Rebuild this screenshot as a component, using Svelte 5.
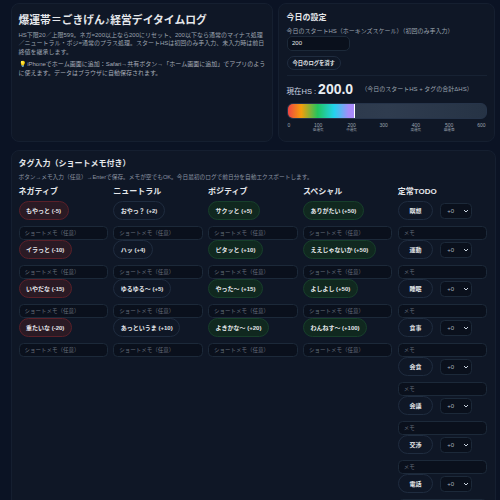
<script>
  const columns = [
    {
      title: "ネガティブ",
      tone: "neg",
      tags: ["もやっと (-5)", "イラっと (-10)", "いやだな (-15)", "重たいな (-20)"],
    },
    {
      title: "ニュートラル",
      tone: "neu",
      tags: ["おやっ？ (+2)", "ハッ (+4)", "ゆるゆる〜 (+5)", "あっというま (+10)"],
    },
    {
      title: "ポジティブ",
      tone: "pos",
      tags: ["サクッと (+5)", "ピタッと (+10)", "やった〜 (+15)", "よきかな〜 (+20)"],
    },
    {
      title: "スペシャル",
      tone: "pos",
      tags: ["ありがたい (+50)", "ええじゃないか (+50)", "よしよし (+50)", "わんねす〜 (+100)"],
    },
  ];

  const todos = ["瞑想", "運動", "睡眠", "食事", "会食", "会議", "交渉", "電話"];

  const ticks = [
    { value: "0", note: "" },
    { value: "100", note: "低運気" },
    { value: "200", note: "中運気" },
    { value: "300", note: "" },
    { value: "400", note: "高運気" },
    { value: "500", note: "爆運帯" },
    { value: "600", note: "" },
  ];
</script>

<div class="page">
  <div class="top">
    <section class="panel intro">
      <h1>爆運帯＝ごきげん♪経営デイタイムログ</h1>
      <p>HS下限20／上限599。ネガ=200以上なら200にリセット、200以下なら通常のマイナス処理／ニュートラル・ポジ=通常のプラス処理。スタートHSは初回のみ手入力、未入力時は前日終値を継承します。</p>
      <p>💡 iPhoneでホーム画面に追加：Safari→共有ボタン→「ホーム画面に追加」でアプリのように使えます。データはブラウザに自動保存されます。</p>
    </section>

    <section class="panel settings">
      <h2>今日の設定</h2>
      <label for="start">今日のスタートHS（ホーキンズスケール）（初回のみ手入力）</label>
      <input id="start" class="start" value="200" />
      <button class="clear">今日のログを消す</button>
      <div class="current">
        <span class="cur-label">現在HS :</span>
        <strong>200.0</strong>
        <span class="cur-note">（今日のスタートHS + タグの合計ΔHS）</span>
      </div>
      <div class="bar">
        <div class="fill"></div>
        <div class="marker"></div>
      </div>
      <div class="ticks">
        {#each ticks as tick}
          <div class="tick">
            <span>{tick.value}</span>
            <small>{tick.note}</small>
          </div>
        {/each}
      </div>
    </section>
  </div>

  <section class="panel tags">
    <h2>タグ入力（ショートメモ付き）</h2>
    <p class="hint">ボタン→メモ入力（任意）→Enterで保存。メモが空でもOK。今日最初のログで前日分を自動エクスポートします。</p>
    <div class="grid">
      {#each columns as col}
        <div class="col">
          <h3>{col.title}</h3>
          {#each col.tags as tag}
            <div class="row"><button class="chip {col.tone}">{tag}</button></div>
            <input class="memo" placeholder="ショートメモ（任意）" />
          {/each}
        </div>
      {/each}
      <div class="col">
        <h3>定常TODO</h3>
        {#each todos as todo}
          <div class="row">
            <button class="chip neu todo">{todo}</button>
            <select><option>+0</option></select>
          </div>
          <input class="memo" placeholder="メモ" />
        {/each}
      </div>
    </div>
  </section>
</div>

<style>
  :global(body) {
    background: #0b1324;
    color: #e5e7eb;
    font-family: "Liberation Sans", "Noto Sans CJK JP", sans-serif;
    overflow: hidden;
  }

  .page {
    height: 500px;
    overflow: hidden;
    padding: 3px 5px 0 10.5px;
    box-sizing: border-box;
  }

  .top {
    display: grid;
    grid-template-columns: 262px 217px;
    gap: 5.5px;
    margin-bottom: 8px;
  }

  .panel {
    background: #0f1726;
    border: 1px solid #151f30;
    border-radius: 8px;
    box-sizing: border-box;
  }

  .intro {
    padding: 9px 6px 9px 7px;
  }

  h1 {
    margin: 0 0 3.6px;
    font-size: 10.8px;
    line-height: 14px;
    font-weight: 700;
    color: #e5e7eb;
  }

  .intro p {
    margin: 0 0 3.3px;
    font-size: 6px;
    line-height: 8.7px;
    color: #9ca3af;
  }

  .intro p:last-child {
    color: #a7adb8;
  }

  h2 {
    margin: 0;
    font-size: 8px;
    line-height: 11px;
    font-weight: 700;
  }

  .settings {
    padding: 8px 7.5px 7.5px;
    display: flex;
    flex-direction: column;
    align-items: flex-start;
  }

  .settings label {
    margin-top: 4px;
    font-size: 6px;
    line-height: 8px;
    color: #9ca3af;
  }

  input,
  select,
  button {
    font-family: inherit;
    box-sizing: border-box;
  }

  .start {
    width: 63px;
    height: 14.5px;
    margin-top: 1px;
    padding: 0 4.5px;
    font-size: 6px;
    color: #e5e7eb;
    background: #0a101c;
    border: 1px solid #1c2939;
    border-radius: 5px;
  }

  .clear {
    margin-top: 5.5px;
    height: 14px;
    padding: 0 5px;
    font-size: 5.3px;
    font-weight: 700;
    color: #e5e7eb;
    background: #0f1726;
    border: 1px solid #1f2c3f;
    border-radius: 7px;
    white-space: nowrap;
  }

  .current {
    align-self: stretch;
    margin-top: 5px;
    padding-top: 5px;
    border-top: 1px solid #172233;
    display: flex;
    align-items: center;
    height: 16px;
    white-space: nowrap;
  }

  .cur-label {
    font-size: 7.5px;
    color: #cbd5e1;
    margin-top: 2px;
  }

  .current strong {
    font-size: 14px;
    margin-left: 2px;
    color: #e9edf2;
  }

  .cur-note {
    margin-left: 8px;
    margin-bottom: 2px;
    font-size: 6px;
    color: #9ca3af;
  }

  .bar {
    position: relative;
    align-self: stretch;
    height: 15.5px;
    margin-top: 6px;
    border-radius: 6px;
    border: 1px solid #26344a;
    box-sizing: border-box;
    background: linear-gradient(90deg, #2a3749, #2f3c4f 50%, #263345);
    overflow: hidden;
  }

  .fill {
    height: 100%;
    width: 33.4%;
    background: linear-gradient(90deg, #ef4444, #f59e0b 20%, #22c55e 45%, #22d3ee 70%, #a78bfa 92%);
  }

  .marker {
    position: absolute;
    top: 0;
    bottom: 0;
    left: 33.4%;
    width: 1.5px;
    background: #fff;
  }

  .ticks {
    align-self: stretch;
    display: flex;
    justify-content: space-between;
    margin-top: 3px;
    padding: 0 1px;
  }

  .tick {
    display: flex;
    flex-direction: column;
    align-items: center;
    font-size: 5px;
    line-height: 6px;
    color: #9ca3af;
    white-space: nowrap;
  }

  .tick small {
    font-size: 3.6px;
    line-height: 5.5px;
    min-height: 5.5px;
  }

  .tags {
    height: 360px;
    width: 485px;
    padding: 7px 7px;
  }

  .hint {
    margin: 4.7px 0 0;
    font-size: 5.7px;
    line-height: 8px;
    color: #8b93a1;
  }

  .grid {
    display: grid;
    grid-template-columns: repeat(5, 89.5px);
    column-gap: 5.3px;
    margin-top: 3.6px;
  }

  .col {
    display: flex;
    flex-direction: column;
    min-width: 0;
  }

  h3 {
    margin: 0 0 2.7px;
    font-size: 8px;
    line-height: 14px;
    font-weight: 700;
    color: #e5e7eb;
  }

  .row {
    display: flex;
    align-items: center;
    gap: 7px;
    height: 19px;
    margin-bottom: 5.5px;
  }

  .chip {
    height: 19px;
    padding: 0 6.5px;
    font-size: 6px;
    font-weight: 700;
    color: #e5e7eb;
    border-radius: 9.5px;
    white-space: nowrap;
    border: 1px solid #1f2c3f;
    background: #0f1726;
  }

  .chip.neg {
    background: #2a1a24;
    border-color: #5a2029;
  }

  .chip.pos {
    background: #10281f;
    border-color: #173f2b;
  }

  .chip.todo {
    width: 35.5px;
    padding: 0;
  }

  select {
    appearance: none;
    width: 31.5px;
    height: 15.5px;
    padding: 0 0 0 6px;
    font-size: 6px;
    color: #a9b1bd;
    background: #0a101c url("data:image/svg+xml,%3Csvg xmlns='http://www.w3.org/2000/svg' width='6' height='4'%3E%3Cpath d='M1 1l2 2 2-2' fill='none' stroke='%23cbd5e1' stroke-width='1'/%3E%3C/svg%3E") no-repeat right 2px center;
    border: 1px solid #1c2939;
    border-radius: 4.5px;
  }

  .memo {
    width: 100%;
    height: 14.5px;
    padding: 0 5px;
    font-size: 5.5px;
    color: #e5e7eb;
    background: #0a101c;
    border: 1px solid #1c2939;
    border-radius: 4.5px;
  }

  .memo::placeholder {
    color: #656d7a;
  }
</style>
